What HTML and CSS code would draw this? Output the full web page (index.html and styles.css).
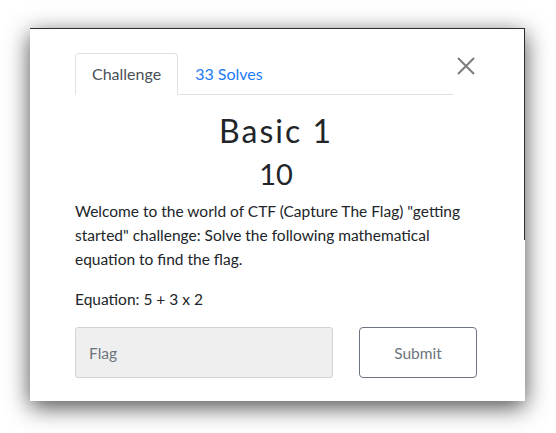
FILE: index.html
```html
<!DOCTYPE html>
<html>
<head>
<meta charset="utf-8">
<link rel="stylesheet" href="styles.css">
</head>
<body>
<div class="modal">
  <div class="head">
    <ul class="tabs">
      <li class="tab active">Challenge</li>
      <li class="tab link">33 Solves</li>
    </ul>
    <button class="close" aria-label="Close">
      <svg width="20" height="20" viewBox="0 0 20 20"><path d="M2 2 L18 18 M18 2 L2 18" stroke="#7b7b7b" stroke-width="2" fill="none"/></svg>
    </button>
  </div>
  <h2 class="title">Basic 1</h2>
  <h3 class="points">10</h3>
  <p class="desc">Welcome to the world of CTF (Capture The Flag) "getting started" challenge: Solve the following mathematical equation to find the flag.</p>
  <p class="desc eq">Equation: 5 + 3 x 2</p>
  <div class="form">
    <input class="flag" type="text" placeholder="Flag">
    <button class="submit">Submit</button>
  </div>
</div>
</body>
</html>
```
FILE: styles.css
```css
html, body {
  margin: 0;
  padding: 0;
  background: #ffffff;
}
body {
  font-family: Lato, "Noto Sans", sans-serif;
  color: #212529;
  padding: 28px 0 32px 30px;
}
.modal {
  position: relative;
  width: 495px;
  height: 373px;
  box-sizing: border-box;
  background: #fff;
  border-top: 1px solid #2a2f33;
  box-shadow: 0 6px 22px rgba(0,0,0,0.7);
  padding: 24px 48px 0 45px;
}
.modal::after {
  content: "";
  position: absolute;
  right: 0;
  top: -1px;
  width: 1px;
  height: 212px;
  background: #2a2f33;
}
.head {
  display: flex;
  align-items: flex-start;
}
.tabs {
  list-style: none;
  margin: 0;
  padding: 0;
  display: flex;
  width: 378px;
  border-bottom: 1px solid #dee2e6;
}
.tab {
  font-size: 16px;
  line-height: 22px;
  padding: 9px 16px 9px 16px;
  margin-bottom: -1px;
  border: 1px solid transparent;
  border-radius: 4px 4px 0 0;
}
.tab.active {
  color: #495057;
  background: #fff;
  border-color: #dee2e6 #dee2e6 #fff;
}
.tab.link {
  color: #1e7bf5;
}
.close {
  margin: 3px 0 0 3px;
  padding: 0;
  border: 0;
  background: none;
  width: 20px;
  height: 20px;
}
.close svg { display: block; }
.title {
  margin: 17px 0 0;
  text-align: center;
  font-weight: 400;
  font-size: 32px;
  line-height: 38px;
  letter-spacing: 2px;
  color: #212529;
}
.points {
  margin: 6px 0 0;
  text-align: center;
  font-weight: 400;
  font-size: 29px;
  line-height: 36px;
  color: #212529;
}
.desc {
  margin: 7px 0 0;
  font-size: 15.5px;
  line-height: 24px;
  font-variant-ligatures: common-ligatures;
}
.eq {
  margin-top: 16px;
}
.form {
  display: flex;
  justify-content: space-between;
  margin-top: 16px;
}
.flag {
  width: 258px;
  height: 51px;
  box-sizing: border-box;
  background: #efefef;
  border: 1px solid #ced4da;
  border-radius: 3px;
  padding: 0 13px;
  font-family: Lato, sans-serif;
  font-size: 15.5px;
  color: #495057;
}
.flag::placeholder { color: #6c757d; }
.submit {
  width: 118px;
  height: 51px;
  box-sizing: border-box;
  background: #fff;
  border: 1px solid #6c757d;
  border-radius: 4px;
  font-family: Lato, sans-serif;
  font-size: 15.5px;
  color: #6c757d;
}
```
